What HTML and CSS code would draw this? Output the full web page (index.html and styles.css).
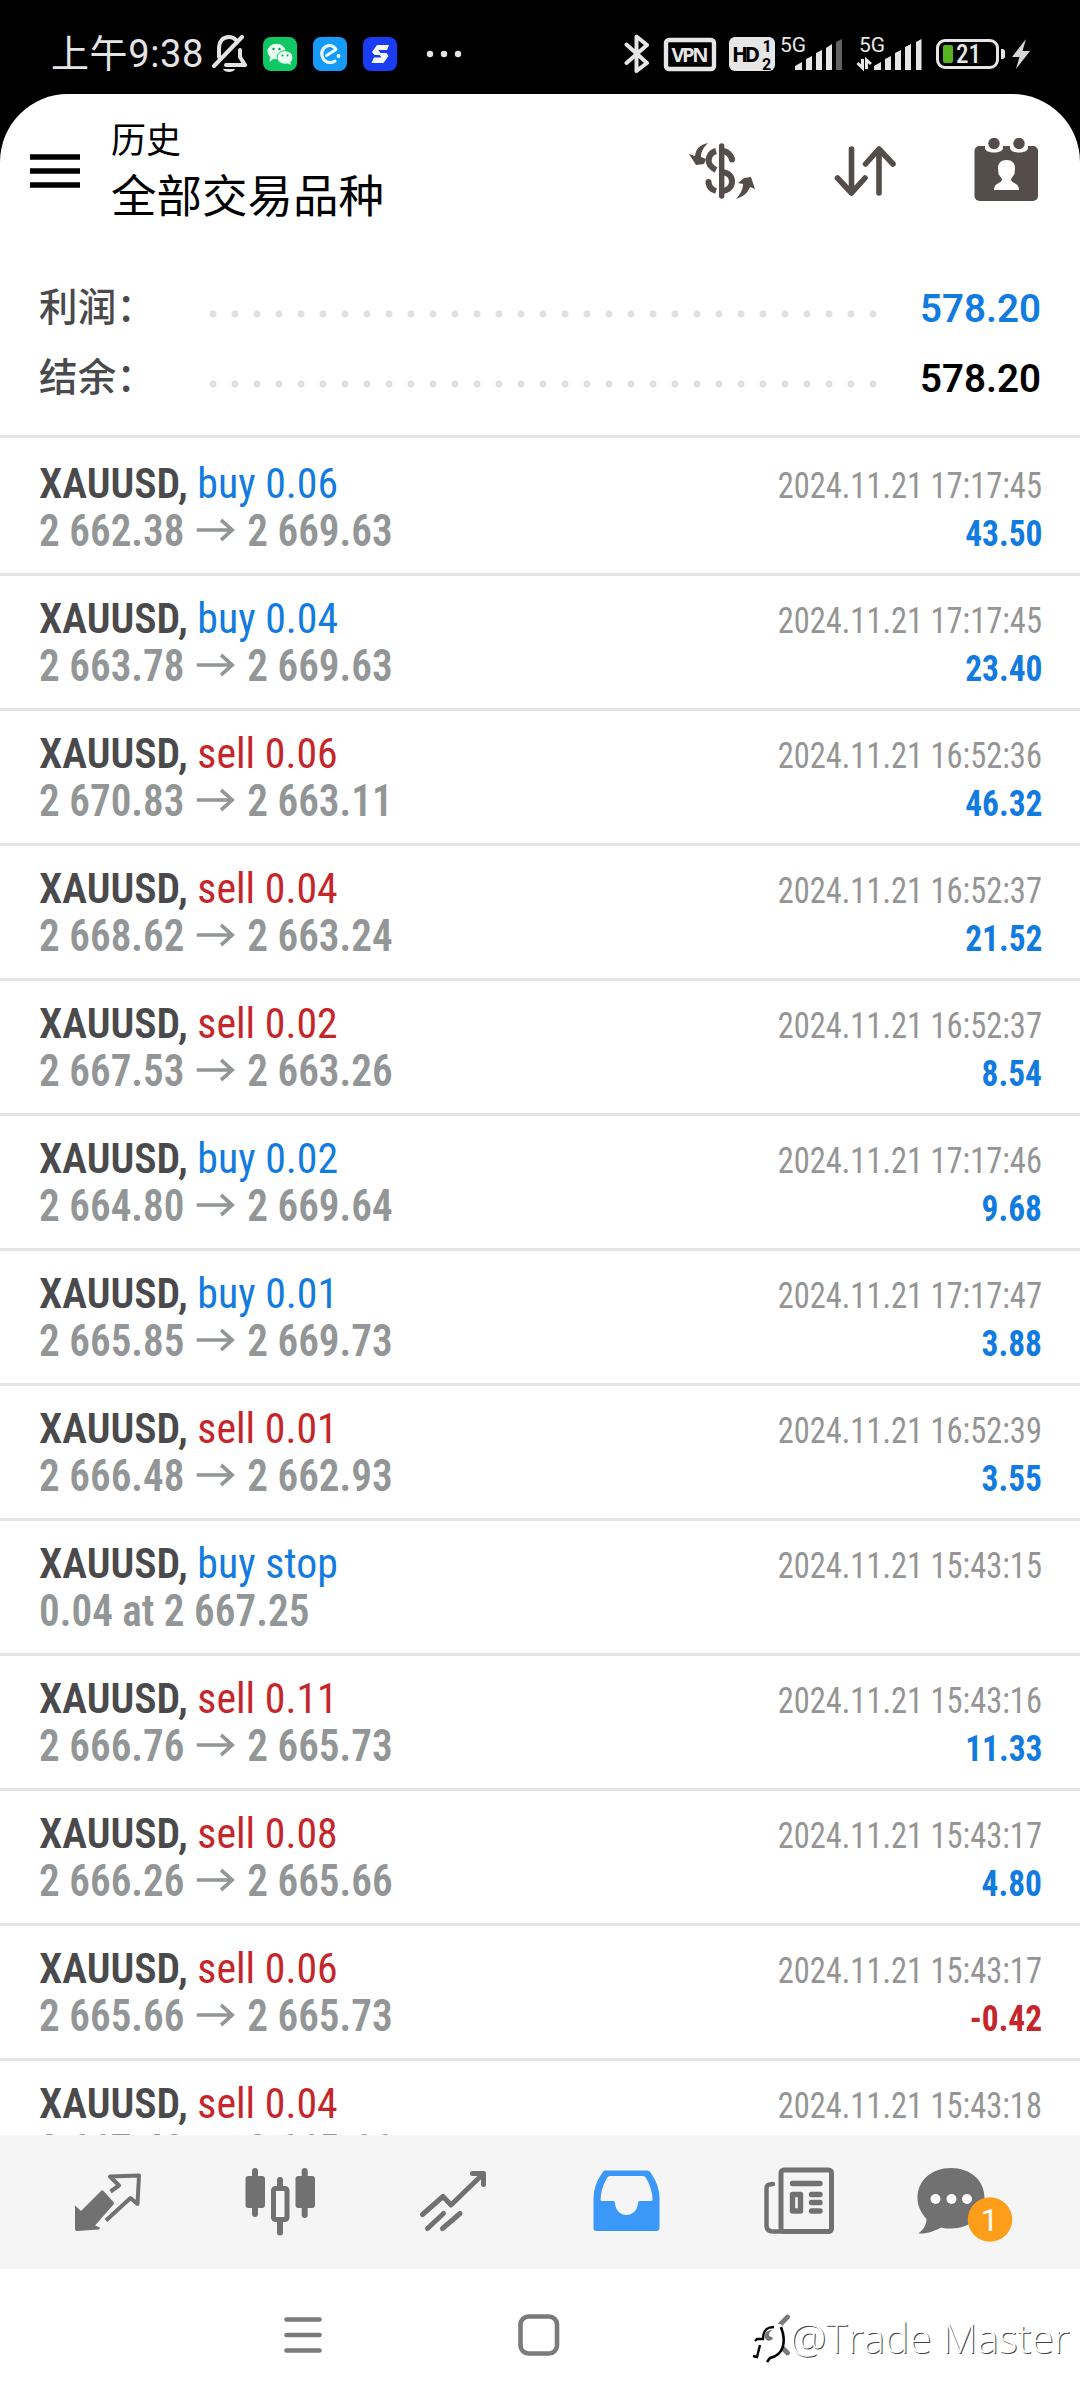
FILE: index.html
```html
<!DOCTYPE html>
<html lang="zh-CN">
<head>
<meta charset="utf-8">
<title>历史</title>
<link rel="stylesheet" href="styles.css">
</head>
<body>
<svg class="defs" width="0" height="0" aria-hidden="true">
  <symbol id="arrow" viewBox="0 0 40 24"><path d="M0 12H38M26 2L38 12L26 22" fill="none" stroke="#929696" stroke-width="3.6"/></symbol>
</svg>
<div class="screen">
  <div class="status">
    <div class="status-left">
      <span class="clock">上午9:38</span>
      <svg class="bell" width="35" height="38" viewBox="212 36 35 38"><g fill="none" stroke="#e4e4e4" stroke-width="4" stroke-linecap="round" stroke-linejoin="round"><path d="M219 58V50C219 42 223 38 229 38C232 38 234 39 236 41"/><path d="M240 51V58L245 66H226"/><path d="M214 67L242 38"/></g><path d="M223 70H235C234 74 224 74 223 70Z" fill="#e4e4e4"/></svg>
      <svg class="app" width="34" height="34" viewBox="0 0 34 34"><rect width="34" height="34" rx="8" fill="#0fc763"/><ellipse cx="13.5" cy="14.5" rx="9" ry="7.8" fill="#e9fff2"/><path d="M7 20L6.500 25L11.500 21Z" fill="#e9fff2"/><ellipse cx="22" cy="20.500" rx="8" ry="6.800" fill="#e9fff2" stroke="#0fc763" stroke-width="1"/><path d="M24 26L28 28L27 24Z" fill="#e9fff2"/><g fill="#0b9a4d"><circle cx="10.500" cy="12" r="1.200"/><circle cx="16.500" cy="12" r="1.200"/><circle cx="19.500" cy="18.500" r="1"/><circle cx="24.500" cy="18.500" r="1"/></g></svg>
      <svg class="app" width="34" height="34" viewBox="0 0 34 34"><rect width="34" height="34" rx="8" fill="#169bfa"/><path d="M13.500 18.500L23 12.500C20.500 7.500 14 7 10.500 11.500C7 16 9 23 14 25C17 26 20 25.500 22 24" fill="none" stroke="#e8fbff" stroke-width="3" stroke-linecap="round" stroke-linejoin="round"/><circle cx="25.500" cy="19" r="1.900" fill="#e8fbff"/></svg>
      <svg class="app" width="34" height="34" viewBox="0 0 34 34"><rect width="34" height="34" rx="8" fill="#1a3cf5"/><path d="M14 8H26L24 13H15.500L17.500 16H23.500L25.500 19L20.500 26H8.500L11 20.500H18.500L16.500 18H11.500L9 15Z" fill="#f3f7ff"/></svg>
      <svg class="more" width="36" height="8" viewBox="0 0 36 8"><g fill="#e4e4e4"><circle cx="4" cy="4" r="3.200"/><circle cx="18" cy="4" r="3.200"/><circle cx="32" cy="4" r="3.200"/></g></svg>
    </div>
    <svg class="status-right" width="408" height="42" viewBox="624 33 408 42">
      <path d="M626.500 44.500L647 63L636.500 71V36.500L647 45L626.500 63" fill="none" stroke="#e6e6e6" stroke-width="4" stroke-linecap="round" stroke-linejoin="round"/>
      <rect x="666" y="40" width="48" height="29" rx="3" fill="none" stroke="#e6e6e6" stroke-width="4.400"/>
      <text class="vpn" x="690" y="61.500" text-anchor="middle" textLength="37">VPN</text>
      <rect x="729" y="37" width="46" height="34" rx="6" fill="#e6e6e6"/>
      <text class="hd" x="732" y="62" textLength="28">HD</text>
      <text class="sim" x="762.500" y="51.500">1</text><text class="sim" x="762" y="69.500">2</text>
      <text class="net" x="780" y="52" textLength="26">5G</text>
      <g fill="#e6e6e6"><path d="M795 70V66L802 62V70ZM806 70V59L812 56V70ZM816 70V53L822 50V70ZM826 70V48L832 44V70Z"/><path d="M836 70V42L842 39V70Z" fill="#626262"/></g>
      <text class="net" x="859" y="52" textLength="26">5G</text>
      <path d="M862.500 59V68L857.500 63M866.500 69V60L871 64" fill="none" stroke="#e6e6e6" stroke-width="3"/>
      <path d="M874 70V66L881 62V70ZM885 70V59L891 56V70ZM895 70V53L901 50V70ZM905 70V47L911 44V70ZM916 70V42L921.500 39V70Z" fill="#e6e6e6"/>
      <rect x="937.500" y="40.500" width="60" height="27" rx="7.500" fill="none" stroke="#e6e6e6" stroke-width="3"/>
      <path d="M1001 49C1005 49 1005 50 1005 54C1005 58 1005 59 1001 59Z" fill="#e6e6e6"/>
      <rect x="943" y="45" width="10" height="18" rx="2" fill="#55b51c"/>
      <text class="batt" x="956" y="63">21</text>
      <path d="M1026 39L1012 57H1019.500L1016 69L1030 51H1022.500Z" fill="#d6d6d6"/>
    </svg>
  </div>

  <div class="app-panel">
    <header class="header">
      <svg class="menu" width="50" height="34" viewBox="0 0 50 34"><path d="M0 3H50M0 17H50M0 31H50" stroke="#000" stroke-width="5.600"/></svg>
      <div class="titles"><div class="title">历史</div><div class="subtitle">全部交易品种</div></div>
      <svg class="i-dollar" width="68" height="58" viewBox="688 142 68 58"><g fill="none" stroke="#544d49" stroke-width="6"><path d="M716 151C709 153 707 160 710 165C711.500 167 713 168.500 716 170"/><path d="M708.500 182.500C709 187 711 189.500 716 191"/><path d="M722 151C727 151 731 155 732 159.500M722 172C728 172.500 732 176 732 181.500C732 187 728 190.500 722 191" /></g><circle cx="708.500" cy="182" r="3" fill="#544d49"/><circle cx="732" cy="159.500" r="3" fill="#544d49"/><path d="M721.700 146V196" stroke="#544d49" stroke-width="5.400" stroke-linecap="round"/><path d="M708 143C700 145 696 148 695 156L689 154L696 165L704 164L706 159L701 157C701 151 704 147 708 143ZM736 199C745 196 748 192 750 187L755 189L751 177L744 178L738 183L743 184C743 190 740 194 736 199Z" fill="#544d49"/></svg>
      <svg class="i-sort" width="62" height="52" viewBox="834 145 62 52"><path d="M851.500 149V193M837.500 178L851.500 193L865 178M879 193V149M865.500 164L879 149L893 164" fill="none" stroke="#544d49" stroke-width="5.600" stroke-linecap="round" stroke-linejoin="round"/></svg>
      <svg class="i-cal" width="64" height="64" viewBox="974 138 64 64"><rect x="974.500" y="146" width="63.500" height="55" rx="5" fill="#544d49"/><path d="M985 145H1003V148C1003 154 985 154 985 148ZM1010 145H1028V148C1028 154 1010 154 1010 148Z" fill="#fff"/><circle cx="994" cy="143.500" r="5.700" fill="#544d49"/><circle cx="1019" cy="143.500" r="5.700" fill="#544d49"/><path d="M1006.500 160C1012 160 1015 163 1015 168L1014.500 174L1011 179C1011 184 1019 182 1019 190H994C994 182 1002 184 1002 179L998.500 174L998 168C998 163 1001 160 1006.500 160Z" fill="#fff"/></svg>
    </header>

    <section class="summary">
      <div class="sum-row"><span class="label">利润：</span><i class="dots"></i><span class="sum pos">578.20</span></div>
      <div class="sum-row"><span class="label">结余：</span><i class="dots"></i><span class="sum">578.20</span></div>
    </section>

    <main class="list">
      <div class="row"><div class="line"><b>XAUUSD, <em class="buy">buy 0.06</em></b><time>2024.11.21 17:17:45</time></div><div class="line"><span class="price">2 662.38<svg><use href="#arrow"/></svg>2 669.63</span><span class="profit">43.50</span></div></div>
      <div class="row"><div class="line"><b>XAUUSD, <em class="buy">buy 0.04</em></b><time>2024.11.21 17:17:45</time></div><div class="line"><span class="price">2 663.78<svg><use href="#arrow"/></svg>2 669.63</span><span class="profit">23.40</span></div></div>
      <div class="row"><div class="line"><b>XAUUSD, <em class="sell">sell 0.06</em></b><time>2024.11.21 16:52:36</time></div><div class="line"><span class="price">2 670.83<svg><use href="#arrow"/></svg>2 663.11</span><span class="profit">46.32</span></div></div>
      <div class="row"><div class="line"><b>XAUUSD, <em class="sell">sell 0.04</em></b><time>2024.11.21 16:52:37</time></div><div class="line"><span class="price">2 668.62<svg><use href="#arrow"/></svg>2 663.24</span><span class="profit">21.52</span></div></div>
      <div class="row"><div class="line"><b>XAUUSD, <em class="sell">sell 0.02</em></b><time>2024.11.21 16:52:37</time></div><div class="line"><span class="price">2 667.53<svg><use href="#arrow"/></svg>2 663.26</span><span class="profit">8.54</span></div></div>
      <div class="row"><div class="line"><b>XAUUSD, <em class="buy">buy 0.02</em></b><time>2024.11.21 17:17:46</time></div><div class="line"><span class="price">2 664.80<svg><use href="#arrow"/></svg>2 669.64</span><span class="profit">9.68</span></div></div>
      <div class="row"><div class="line"><b>XAUUSD, <em class="buy">buy 0.01</em></b><time>2024.11.21 17:17:47</time></div><div class="line"><span class="price">2 665.85<svg><use href="#arrow"/></svg>2 669.73</span><span class="profit">3.88</span></div></div>
      <div class="row"><div class="line"><b>XAUUSD, <em class="sell">sell 0.01</em></b><time>2024.11.21 16:52:39</time></div><div class="line"><span class="price">2 666.48<svg><use href="#arrow"/></svg>2 662.93</span><span class="profit">3.55</span></div></div>
      <div class="row"><div class="line"><b>XAUUSD, <em class="buy">buy stop</em></b><time>2024.11.21 15:43:15</time></div><div class="line"><span class="price">0.04 at 2 667.25</span></div></div>
      <div class="row"><div class="line"><b>XAUUSD, <em class="sell">sell 0.11</em></b><time>2024.11.21 15:43:16</time></div><div class="line"><span class="price">2 666.76<svg><use href="#arrow"/></svg>2 665.73</span><span class="profit">11.33</span></div></div>
      <div class="row"><div class="line"><b>XAUUSD, <em class="sell">sell 0.08</em></b><time>2024.11.21 15:43:17</time></div><div class="line"><span class="price">2 666.26<svg><use href="#arrow"/></svg>2 665.66</span><span class="profit">4.80</span></div></div>
      <div class="row"><div class="line"><b>XAUUSD, <em class="sell">sell 0.06</em></b><time>2024.11.21 15:43:17</time></div><div class="line"><span class="price">2 665.66<svg><use href="#arrow"/></svg>2 665.73</span><span class="profit neg">-0.42</span></div></div>
      <div class="row"><div class="line"><b>XAUUSD, <em class="sell">sell 0.04</em></b><time>2024.11.21 15:43:18</time></div><div class="line"><span class="price">2 667.48<svg><use href="#arrow"/></svg>2 665.66</span></div></div>
    </main>
  </div>

  <nav class="tabs">
    <svg width="70" height="72" viewBox="73.500 2166 70 72"><path d="M75.500 2205.500L81.500 2211L102 2190.500Q103 2190 104 2191L114 2202Q115 2203.500 114 2204.500L95.500 2225.500L100.500 2227.500L99.500 2229.500L77.500 2231Q75.500 2231 75.500 2229Z" fill="#717171"/><path d="M111 2191.500L119.500 2185.500L110.500 2176.500L139.500 2175.500L138 2204L131 2198L106.500 2220.500" fill="none" stroke="#717171" stroke-width="4" stroke-linejoin="round"/></svg>
    <svg width="72" height="72" viewBox="245 2166 72 72"><g fill="#717171"><rect x="246.500" y="2176" width="19.500" height="32" rx="3"/><rect x="296.500" y="2176" width="19.500" height="32" rx="3"/></g><path d="M256 2171V2214M305.700 2171V2215M281 2180V2188M281 2222V2232.500" stroke="#717171" stroke-width="6" stroke-linecap="round"/><rect x="274.500" y="2188.500" width="13.500" height="31" rx="2" fill="none" stroke="#717171" stroke-width="5"/></svg>
    <svg width="72" height="72" viewBox="418 2166 72 72"><path d="M423.500 2214.500L444 2196.500L452 2205L484 2174M473.500 2173.500H484.500V2184.500M428.500 2228.500L444.500 2213.500M443.500 2228.500L461 2213.500" fill="none" stroke="#717171" stroke-width="5" stroke-linecap="round" stroke-linejoin="round"/></svg>
    <svg width="72" height="72" viewBox="591 2166 72 72"><path fill-rule="evenodd" d="M606 2170.500H648Q650.500 2170.500 651.500 2172.500Q660.500 2185 660.500 2198V2228Q660.500 2231 657.500 2231H597.500Q594.500 2231 594.500 2228V2198Q594.500 2185 603.500 2172.500Q604.500 2170.500 606 2170.500ZM611 2176Q609 2176 608 2178Q602 2188 601.500 2200Q601.500 2201 603 2201H614Q616 2201 616 2203C617 2219 638 2219 639 2203Q639 2201 641 2201H652Q654 2201 653.500 2199Q653 2188 647 2178Q646 2176 644 2176Z" fill="#3c98f8"/></svg>
    <svg width="72" height="72" viewBox="765 2166 72 72"><g fill="none" stroke="#717171" stroke-linecap="round" stroke-linejoin="round"><rect x="783" y="2170" width="50.500" height="61.500" rx="3" stroke-width="5"/><path d="M775 2184Q768.500 2184 768.500 2188V2226Q769 2231.500 775 2231.500H783" stroke-width="4.500"/><path d="M794.500 2183.500H822M813.500 2194.500H822M813.500 2202.500H822M813.500 2211H822" stroke-width="5.400"/><rect x="794.500" y="2194.500" width="8" height="16.500" stroke-width="5.400"/></g></svg>
    <svg class="chat" width="100" height="78" viewBox="915 2166 100 78"><path d="M953 2168C972 2168 986.500 2180 986.500 2198C986.500 2216 972 2228.500 953 2228.500C949 2228.500 946 2228.500 943 2227.500C937 2231 929 2234 920.500 2233.500C925 2230 928.500 2225 928.500 2219C923 2213 919.500 2206 919.500 2198C919.500 2180 934 2168 953 2168Z" fill="#717171"/><g fill="#fff"><circle cx="937.500" cy="2199" r="5"/><circle cx="953.500" cy="2199" r="5"/><circle cx="969" cy="2199" r="5"/></g><circle cx="992" cy="2219.500" r="22.200" fill="#fd9e1b"/><text class="badge" x="991.500" y="2230.500" text-anchor="middle">1</text></svg>
  </nav>

  <div class="sysnav">
    <svg width="38" height="38" viewBox="0 0 38 38"><path d="M2.500 3.500H35.500M2.500 19H35.500M2.500 34.500H35.500" stroke="#7a7a7a" stroke-width="4.600" stroke-linecap="round"/></svg>
    <svg class="home" width="42" height="42" viewBox="0 0 42 42"><rect x="2.500" y="2.500" width="36.500" height="37" rx="8" fill="none" stroke="#7a7a7a" stroke-width="4.600"/></svg>
    <svg class="back" width="24" height="42" viewBox="0 0 24 42"><path d="M20.500 3L3 21L20.500 39" fill="none" stroke="#7a7a7a" stroke-width="4.800" stroke-linecap="round"/></svg>
    <div class="watermark">
      <svg width="38" height="56" viewBox="750 2310 38 56"><path d="M764 2338C764 2333 766 2329 775 2325L781 2325C786 2333 785 2352 778 2356C770 2358 764 2362 762 2358L757 2350L762 2339Z" fill="#fff"/><path d="M765 2339C768 2344 771 2341 773 2340L772 2338C768 2338 768 2334 772 2331C766 2331 764 2335 765 2339Z" fill="#777"/><g fill="none" stroke="#000"><path d="M753 2357L757 2358L760 2346M755 2342L757 2340H763C763 2331 767 2328 774 2328" stroke-width="2.400"/><path d="M781 2328C787 2344 783 2356 770 2359L767 2363" stroke-width="2.600"/></g></svg>
      <span>@Trade Master</span>
    </div>
  </div>
</div>
</body>
</html>
```
FILE: styles.css
```css
* { box-sizing: border-box; }
body { margin: 0; background: #000; font-family: Roboto, "Noto Sans CJK SC", sans-serif; }
svg { display: block; flex: none; }
.defs { position: absolute; }
.screen { width: 1080px; height: 2400px; display: flex; flex-direction: column; background: #000; overflow: hidden; }

.status { height: 94px; flex: none; display: flex; justify-content: space-between; padding: 33px 48px 0 51px; }
.status-left { display: flex; height: 42px; align-items: center; }
.clock { width: 161px; font: 400 38px/42px Roboto, "Noto Sans CJK SC", sans-serif; letter-spacing: .6px; color: #e4e4e4; white-space: nowrap; }
.app { margin-left: 16px; }
.more { margin-left: 29px; }
.vpn { font: 700 20px "Open Sans", sans-serif; fill: #e6e6e6; }
.hd { font: 700 21px "Open Sans", sans-serif; fill: #000; }
.sim { font: 700 16px Roboto, sans-serif; fill: #000; }
.net { font: 400 21px Roboto, sans-serif; fill: #e6e6e6; }
.batt { font: 500 25px "Roboto Condensed", sans-serif; fill: #e6e6e6; }

.app-panel { height: 2041px; flex: none; background: #fff; border-radius: 68px 68px 0 0; overflow: hidden; }
.header { height: 176px; display: flex; align-items: flex-start; padding: 0 42px 0 30px; color: #000; }
.menu { margin: 60px 31px 0 0; }
.titles { flex: 1; padding-top: 26px; white-space: nowrap; }
.title { font-size: 35px; line-height: 44px; }
.subtitle { font-size: 45.500px; line-height: 67px; }
.i-dollar { margin: 48px 78px 0 0; }
.i-sort { margin: 51px 78px 0 0; }
.i-cal { margin-top: 44px; }

.summary { height: 165px; padding: 3px 39px 0; }
.sum-row { height: 70px; display: flex; align-items: center; }
.label { width: 170px; margin-top: -8px; font-size: 38.500px; font-weight: 500; color: #4a4a4c; letter-spacing: .3px; white-space: nowrap; }
.dots { width: 682px; height: 8px; margin-top: 11px; background: radial-gradient(circle at 4px 4px, #e0e0e0 3px, transparent 4px) 0 0 / 22px 8px; }
.sum { flex: 1; text-align: right; font-size: 38.500px; font-weight: 600; color: #000; }
.pos { color: #127bdf; }

.row { height: 135px; border-top: 3px solid #e5e5e5; padding: 18px 38px 0 39px; font-family: "Roboto Condensed", sans-serif; }
.row:first-child { height: 138px; padding-top: 21px; }
.line { height: 48px; line-height: 48px; display: flex; justify-content: space-between; align-items: baseline; white-space: nowrap; }
b { font-size: 43px; font-weight: 600; color: #4a4a4c; transform: scaleX(.972); transform-origin: left; }
em { font-style: normal; font-weight: 400; }
.buy { color: #127bdf; }
.sell { color: #c4262b; }
time { font-size: 36.500px; color: #959595; transform: scaleX(.89); transform-origin: right; }
.price { font-size: 44px; font-weight: 600; color: #929696; transform: scaleX(.936); transform-origin: left; }
.price svg { display: inline-block; width: 43px; height: 24px; margin: 0 12px; vertical-align: 4px; }
.profit { font-size: 36.500px; font-weight: 700; color: #127bdf; transform: scaleX(.915); transform-origin: right; }
.neg { color: #c4262b; }

.tabs { height: 134px; flex: none; background: #f5f5f5; display: flex; gap: 101px; padding: 31px 0 0 73px; }
.chat { margin-left: -23px; }
.badge { font: 400 32px Roboto, sans-serif; fill: #fff; }

.sysnav { flex: 1; position: relative; background: #fff; display: flex; align-items: center; padding-left: 284px; }
.home { margin-left: 196px; }
.back { margin-left: 207px; }
.watermark { position: absolute; left: 750px; top: 40px; display: flex; align-items: center; gap: 2px; color: #fff; font: 300 40.700px "Open Sans", sans-serif; text-shadow: 1px 1px 0 #444; white-space: nowrap; }
```
